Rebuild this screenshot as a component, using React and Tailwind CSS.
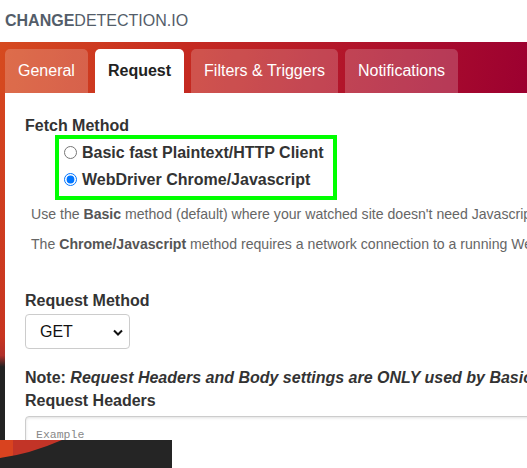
import React from "react";

const tabs = ["General", "Request", "Filters & Triggers", "Notifications"];

const App = () => {
  return (
    <div className="relative w-[527px] h-[468px] overflow-hidden bg-white font-['Liberation_Sans',Arial,sans-serif] text-[#333]">
      <header className="h-[42px] px-[5px] flex items-center text-[16px] text-[#535d69]">
        <span className="font-bold">CHANGE</span>
        <span>DETECTION.IO</span>
      </header>

      <nav className="h-[51px] pt-[7px] px-[5px] flex gap-[7px] bg-[linear-gradient(100deg,#d64a1f_0%,#c52a20_35%,#b2152a_65%,#9c0030_100%)]">
        {tabs.map((tab) => (
          <div
            key={tab}
            className={
              tab === "Request"
                ? "h-[44px] px-[13px] flex items-center rounded-t-[5px] bg-white text-[16px] font-bold text-[#222]"
                : "h-[44px] px-[13px] flex items-center rounded-t-[5px] bg-white/20 text-[16px] text-white"
            }
          >
            {tab}
          </div>
        ))}
      </nav>

      <div className="flex">
        <div className="w-[5px] h-[375px] shrink-0 bg-[linear-gradient(180deg,#d5451f_0%,#c83520_65%,#b0302a_70%,#222_73%,#222_100%)]" />
        <main className="pl-[20px] pt-[23px] whitespace-nowrap">
          <h2 className="text-[16px] leading-[19px] font-bold">Fetch Method</h2>

          <div className="ml-[30px] w-[282px] border-[4px] border-[#00ff00] pt-[0px] pb-[3px] pl-[5px]">
            <label className="h-[27px] flex items-center gap-[5px] text-[16px] font-bold">
              <input type="radio" name="fetch" className="w-[13px] h-[13px] m-0" />
              Basic fast Plaintext/HTTP Client
            </label>
            <label className="h-[27px] flex items-center gap-[5px] text-[16px] font-bold">
              <input type="radio" name="fetch" defaultChecked className="w-[13px] h-[13px] m-0" />
              WebDriver Chrome/Javascript
            </label>
          </div>

          <p className="mt-[5px] ml-[6px] text-[14.1px] leading-[19px] text-[#666]">
            Use the <strong className="text-[#555]">Basic</strong> method (default) where your watched site doesn't need Javascript to render.
          </p>
          <p className="mt-[11px] ml-[6px] text-[14.1px] leading-[19px] text-[#666]">
            The <strong className="text-[#555]">Chrome/Javascript</strong> method requires a network connection to a running WebDriver+Chrome server.
          </p>

          <h2 className="mt-[37px] text-[16px] leading-[19px] font-bold">Request Method</h2>
          <div className="relative mt-[4px] w-[105px] h-[35px] rounded-[4px] border border-[#ccc] flex items-center pl-[14px] text-[16px] text-[#111]">
            GET
            <svg className="absolute right-[6px] top-[14px]" width="10" height="7" viewBox="0 0 10 7">
              <path d="M1 1.5 L5 5.5 L9 1.5" fill="none" stroke="#111" strokeWidth="2" />
            </svg>
          </div>

          <p className="mt-[17px] text-[16px] leading-[23px] font-bold">
            Note: <em>Request Headers and Body settings are ONLY used by Basic fast Plaintext/HTTP Client fetch methods.</em>
          </p>
          <h2 className="text-[16px] leading-[23px] font-bold">Request Headers</h2>
          <div className="mt-[4px] w-[520px] h-[60px] rounded-[4px] border border-[#ccc] shadow-[inset_0_1px_3px_rgba(0,0,0,0.12)] pl-[10px] pt-[9px] font-['Liberation_Mono',monospace] text-[11.5px] text-[#888]">
            Example
          </div>
        </main>
      </div>

      <div className="absolute left-0 top-[440px] w-[172px] h-[28px] bg-[#252525]">
        <svg className="absolute left-0 top-0" width="70" height="20" viewBox="0 0 70 20">
          <rect x="0" y="0" width="70" height="20" fill="#c23427" />
          <rect x="0" y="0" width="13" height="20" fill="#d9431f" />
          <path d="M0 18 Q30 14 62 0 L70 0 L70 20 L0 20 Z" fill="#252525" />
        </svg>
      </div>
    </div>
  );
};

export default App;
